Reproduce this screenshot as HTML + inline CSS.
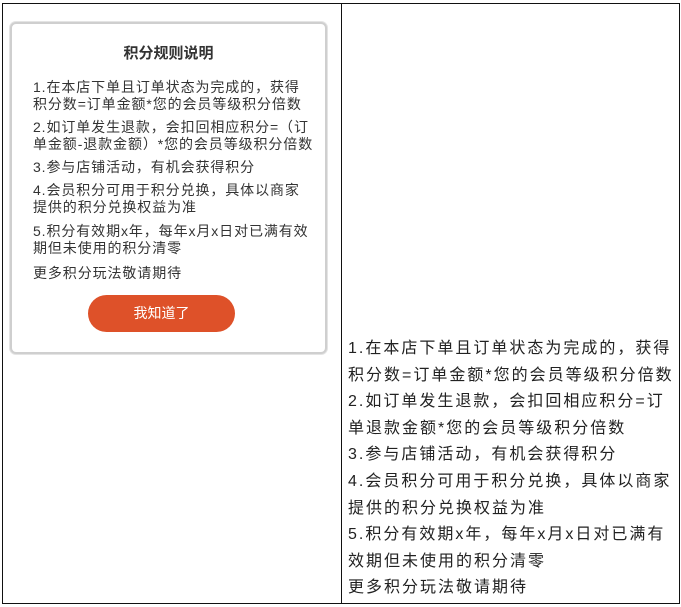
<!DOCTYPE html>
<html><head><meta charset="utf-8"><style>
body{margin:0;width:681px;height:607px;background:#fff;position:relative;overflow:hidden;font-family:"Liberation Sans","Noto Sans CJK SC",sans-serif;color:#222}
.b{position:absolute;background:#111}
.card{position:absolute;left:10px;top:22px;width:313px;height:328px;border:2px solid #cfcfcf;border-radius:6px;background:#fff;box-shadow:0 0 0 1px #e4e4e4}
.t{position:absolute;left:0;width:100%;text-align:center;top:18px;font-size:15px;font-weight:bold;color:#333}
.lt{position:absolute;left:21px;font-size:14px;letter-spacing:0.9px;line-height:16.5px;color:#333;white-space:nowrap}
.btn{position:absolute;left:76px;top:271px;width:147px;height:37px;border-radius:19px;background:#de5129;color:#fff;font-size:14px;text-align:center;line-height:37px}
.r{position:absolute;left:348px;font-size:16px;letter-spacing:2px;line-height:26.6px;color:#222;white-space:nowrap;top:336px}
</style></head><body>
<div class="b" style="left:2px;top:3px;width:678px;height:1px"></div>
<div class="b" style="left:2px;top:603px;width:678px;height:1px"></div>
<div class="b" style="left:2px;top:3px;width:1px;height:601px"></div>
<div class="b" style="left:679px;top:3px;width:1px;height:601px"></div>
<div class="b" style="left:341px;top:3px;width:1px;height:601px"></div>
<div class="card">
<div class="t">积分规则说明</div>
<div class="lt" style="top:55px">1.在本店下单且订单状态为完成的，获得<br>积分数=订单金额*您的会员等级积分倍数</div>
<div class="lt" style="top:95px">2.如订单发生退款，会扣回相应积分=（订<br>单金额-退款金额）*您的会员等级积分倍数</div>
<div class="lt" style="top:135px">3.参与店铺活动，有机会获得积分</div>
<div class="lt" style="top:158px">4.会员积分可用于积分兑换，具体以商家<br>提供的积分兑换权益为准</div>
<div class="lt" style="top:199px">5.积分有效期x年，每年x月x日对已满有效<br>期但未使用的积分清零</div>
<div class="lt" style="top:241px">更多积分玩法敬请期待</div>
<div class="btn">我知道了</div>
</div>
<div class="r">1.在本店下单且订单状态为完成的，获得<br>积分数=订单金额*您的会员等级积分倍数<br>2.如订单发生退款，会扣回相应积分=订<br>单退款金额*您的会员等级积分倍数<br>3.参与店铺活动，有机会获得积分<br>4.会员积分可用于积分兑换，具体以商家<br>提供的积分兑换权益为准<br>5.积分有效期x年，每年x月x日对已满有<br>效期但未使用的积分清零<br>更多积分玩法敬请期待</div>
</body></html>
